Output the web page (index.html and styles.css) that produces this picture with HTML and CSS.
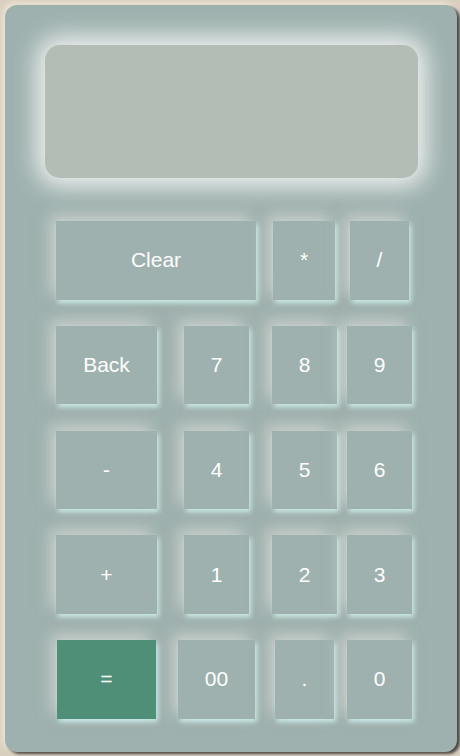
FILE: index.html
```html
<!DOCTYPE html>
<html>
<head>
<meta charset="utf-8">
<link rel="stylesheet" href="styles.css">
</head>
<body>
<div class="calc">
  <div class="display"></div>
  <div class="keys">
    <div class="row r1">
      <button class="key">Clear</button>
      <button class="key">*</button>
      <button class="key">/</button>
    </div>
    <div class="row rn">
      <button class="key">Back</button>
      <button class="key">7</button>
      <button class="key">8</button>
      <button class="key">9</button>
    </div>
    <div class="row rn">
      <button class="key">-</button>
      <button class="key">4</button>
      <button class="key">5</button>
      <button class="key">6</button>
    </div>
    <div class="row rn">
      <button class="key">+</button>
      <button class="key">1</button>
      <button class="key">2</button>
      <button class="key">3</button>
    </div>
    <div class="row r5">
      <button class="key eq">=</button>
      <button class="key">00</button>
      <button class="key">.</button>
      <button class="key">0</button>
    </div>
  </div>
</div>
</body>
</html>
```
FILE: styles.css
```css
* { box-sizing: border-box; }
html, body { margin: 0; padding: 0; }
body {
  background: #d9cfbf;
  width: 460px;
  height: 756px;
  overflow: hidden;
  font-family: "Liberation Sans", Arial, sans-serif;
}
.calc {
  margin: 5px 0 0 5px;
  width: 452px;
  height: 747px;
  border-radius: 12px;
  background: #9eb1ae;
  box-shadow: 3px 2px 3px #4d4843, -2px -2px 6px rgba(255, 250, 235, 0.6);
  padding: 40px 0 0 0;
}
.display {
  margin-left: 40px;
  width: 373px;
  height: 133px;
  border-radius: 15px;
  background: #b3bdb5;
  box-shadow: 0 0 24px 8px rgba(255, 255, 255, 0.85);
}
.keys {
  margin-top: 43px;
  padding-left: 51px;
  display: flex;
  flex-direction: column;
  gap: 26.25px;
}
.row {
  display: flex;
  height: 78.5px;
}
.key {
  height: 100%;
  border: none;
  padding: 0;
  margin: 0;
  background: #9eb1ae;
  color: #fff;
  font-family: "Liberation Sans", Arial, sans-serif;
  font-size: 21px;
  box-shadow: 2px 3px 5px rgba(205, 240, 235, 0.9), -6px -6px 14px rgba(235, 230, 225, 0.55);
}
.eq { background: #4f8f78; }

.r1 .key:nth-child(1) { width: 200px; }
.r1 .key:nth-child(2) { width: 62px; margin-left: 17px; }
.r1 .key:nth-child(3) { width: 59px; margin-left: 15px; }

.rn .key:nth-child(1) { width: 101px; }
.rn .key:nth-child(2) { width: 65px; margin-left: 27px; }
.rn .key:nth-child(3) { width: 65px; margin-left: 23px; }
.rn .key:nth-child(4) { width: 65px; margin-left: 10px; }

.r5 .key:nth-child(1) { width: 99px; margin-left: 1px; }
.r5 .key:nth-child(2) { width: 77px; margin-left: 22px; }
.r5 .key:nth-child(3) { width: 59px; margin-left: 20px; }
.r5 .key:nth-child(4) { width: 65px; margin-left: 13px; }
```
